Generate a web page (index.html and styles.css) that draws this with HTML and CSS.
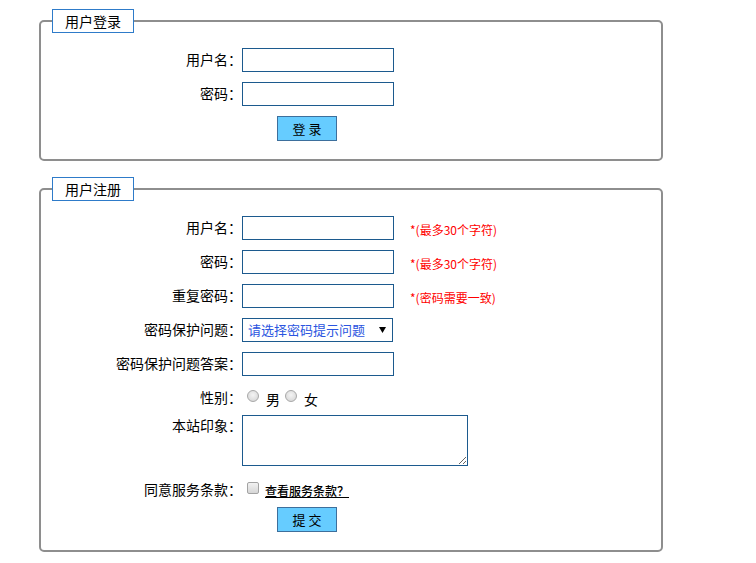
FILE: index.html
```html
<!DOCTYPE html>
<html lang="zh-CN">
<head>
<meta charset="utf-8">
<title>用户登录与注册</title>
<link rel="stylesheet" href="styles.css">
</head>
<body>
<div class="page">
  <fieldset class="box box-login">
    <legend class="box-title">用户登录</legend>
    <div class="row">
      <label class="lbl">用户名：</label>
      <input class="txt" type="text">
    </div>
    <div class="row">
      <label class="lbl">密码：</label>
      <input class="txt" type="password">
    </div>
    <div class="row row-btn">
      <span class="lbl"></span>
      <button class="btn" type="button">登 录</button>
    </div>
  </fieldset>

  <fieldset class="box box-reg">
    <legend class="box-title">用户注册</legend>
    <div class="row">
      <label class="lbl">用户名：</label>
      <input class="txt" type="text">
      <span class="hint">*(最多30个字符)</span>
    </div>
    <div class="row">
      <label class="lbl">密码：</label>
      <input class="txt" type="password">
      <span class="hint">*(最多30个字符)</span>
    </div>
    <div class="row">
      <label class="lbl">重复密码：</label>
      <input class="txt" type="password">
      <span class="hint">*(密码需要一致)</span>
    </div>
    <div class="row">
      <label class="lbl">密码保护问题：</label>
      <span class="sel-wrap">
        <select class="sel">
          <option>请选择密码提示问题</option>
        </select>
        <svg class="sel-arrow" width="7" height="6" viewBox="0 0 7 6"><path d="M0 0H7L3.5 6Z" fill="#000"/></svg>
      </span>
    </div>
    <div class="row">
      <label class="lbl">密码保护问题答案：</label>
      <input class="txt" type="text">
    </div>
    <div class="row row-gender">
      <label class="lbl">性别：</label>
      <input class="radio" type="radio" name="sex"><span class="opt">男</span>
      <input class="radio" type="radio" name="sex"><span class="opt">女</span>
    </div>
    <div class="row row-area">
      <label class="lbl lbl-top">本站印象：</label>
      <textarea class="area"></textarea>
    </div>
    <div class="row row-agree">
      <label class="lbl">同意服务条款：</label>
      <input class="check" type="checkbox">
      <a class="terms" href="#">查看服务条款？</a>
    </div>
    <div class="row row-btn">
      <span class="lbl"></span>
      <button class="btn" type="button">提 交</button>
    </div>
  </fieldset>
</div>
</body>
</html>
```

FILE: styles.css
```css
html, body {
  margin: 0;
  padding: 0;
  background: #fff;
}

body {
  font-family: "Noto Sans CJK SC", "Liberation Sans", sans-serif;
  font-size: 14px;
  color: #000;
}

.page {
  padding: 9px 0 0 39px;
}

.box {
  box-sizing: border-box;
  width: 624px;
  margin: 0;
  padding: 15px 0 18px 0;
  border: 2px solid #8e8e8e;
  border-radius: 5px;
}

.box-reg {
  margin-top: 16px;
  padding-bottom: 18px;
}

.box-title {
  margin-left: 11px;
  padding: 0 12px;
  height: 22px;
  line-height: 22px;
  border: 1px solid #2e7bc9;
  background: #fff;
  font-size: 14px;
}

.row {
  display: flex;
  align-items: center;
  height: 24px;
  margin-bottom: 10px;
}

.lbl {
  flex: 0 0 auto;
  width: 201px;
  text-align: right;
  line-height: 20px;
  padding-bottom: 3px;
  white-space: nowrap;
}

.txt {
  box-sizing: border-box;
  width: 152px;
  height: 24px;
  margin: 0;
  padding: 0 4px;
  border: 1px solid #1c5a8e;
  font: inherit;
  outline: none;
}

.hint {
  margin-left: 16px;
  margin-top: 3px;
  color: #ff0000;
  font-size: 12px;
}

.sel-wrap {
  position: relative;
  display: inline-block;
  width: 151px;
  height: 24px;
}

.sel {
  box-sizing: border-box;
  width: 151px;
  height: 24px;
  margin: 0;
  padding: 0 0 2px 5px;
  border: 1px solid #1c5a8e;
  border-radius: 0;
  background: #fff;
  color: #2b55e0;
  font-family: "Noto Sans CJK SC", sans-serif;
  font-size: 13px;
  -webkit-appearance: none;
  appearance: none;
  outline: none;
}

.sel-arrow {
  position: absolute;
  right: 7px;
  top: 9px;
  pointer-events: none;
}

.row-gender {
  margin-bottom: 5px;
}

.radio {
  -webkit-appearance: none;
  appearance: none;
  box-sizing: border-box;
  width: 12px;
  height: 12px;
  margin: 0 0 4px 5px;
  border: 1px solid #a8a8a8;
  border-radius: 50%;
  background: radial-gradient(circle at 50% 40%, #f4f4f4 0%, #dcdcdc 70%, #c8c8c8 100%);
}

.opt {
  margin-left: 7px;
  margin-top: 1px;
}

.row-area {
  height: auto;
  align-items: flex-start;
  margin-bottom: 12px;
}

.lbl-top {
  padding-top: 0;
}

.area {
  box-sizing: border-box;
  width: 226px;
  height: 51px;
  margin: 0;
  border: 1px solid #1c5a8e;
  font: inherit;
  outline: none;
  resize: both;
}

.row-agree {
  margin-bottom: 5px;
}

.check {
  -webkit-appearance: none;
  appearance: none;
  box-sizing: border-box;
  width: 12px;
  height: 12px;
  margin: 0 0 5px 5px;
  border: 1px solid #a3a3a3;
  border-radius: 2px;
  background: linear-gradient(#f2f2f2, #d6d6d6);
}

.terms {
  margin-left: 6px;
  margin-top: 1px;
  color: #000;
  font-size: 12px;
  font-weight: 500;
  text-decoration: underline;
}

.row-btn {
  height: 25px;
  margin-bottom: 0;
}

.btn {
  box-sizing: border-box;
  width: 60px;
  height: 25px;
  margin: 0 0 0 35px;
  padding: 0;
  border: 1px solid #3d6f9c;
  border-radius: 0;
  background: #66ccff;
  color: #000;
  font-family: "Noto Sans CJK SC", sans-serif;
  font-size: 13px;
  line-height: 23px;
}
```
